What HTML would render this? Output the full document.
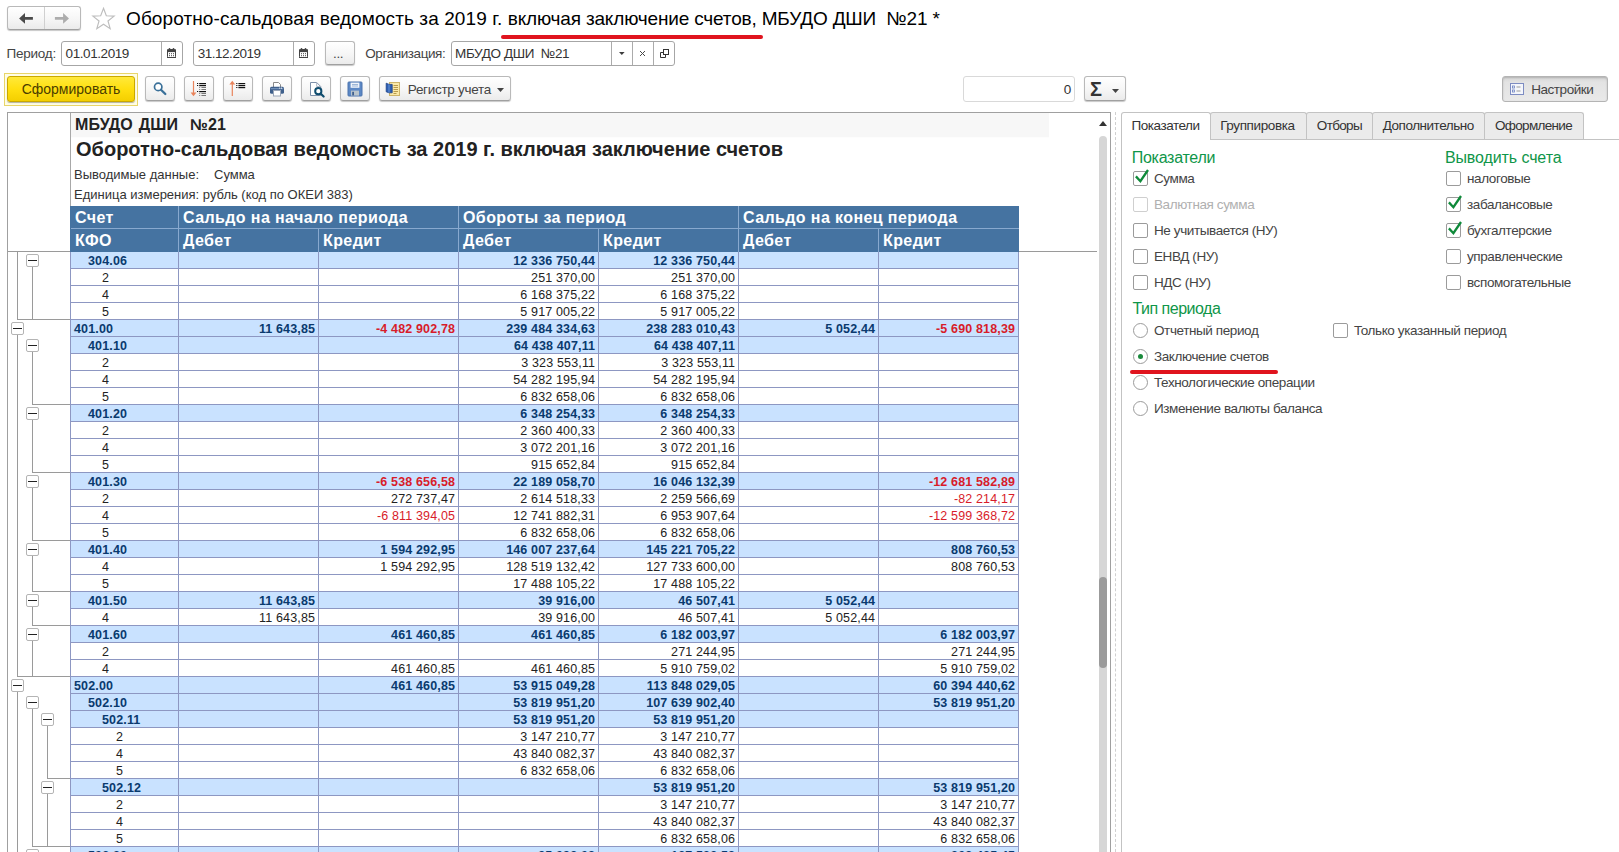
<!DOCTYPE html>
<html lang="ru">
<head>
<meta charset="utf-8">
<title>ОСВ</title>
<style>
*{box-sizing:border-box;margin:0;padding:0}
html,body{width:1619px;height:852px;overflow:hidden;background:#fff}
body{position:relative;font-family:"Liberation Sans",sans-serif;font-size:13px;color:#333;}
.abs{position:absolute}
/* generic button */
.btn{position:absolute;border:1px solid #b9b9b9;border-bottom-color:#a0a0a0;border-radius:3px;background:linear-gradient(#ffffff,#f6f6f6 55%,#ebebeb);box-shadow:0 1px 1px rgba(0,0,0,.22);}
.inp{position:absolute;border:1px solid #a6a6a6;border-radius:3px;background:#fff;height:25px}
.lbl{position:absolute;white-space:nowrap;color:#444;font-size:13.5px;letter-spacing:-.37px}
/* title */
#title{left:126px;top:8px;font-size:19px;color:#000;white-space:nowrap;line-height:22px}
/* sheet */
#sheet{position:absolute;left:7px;top:112px;width:1104px;height:760px;border:1px solid #a0a0a0;background:#fff}
.r{position:absolute;left:0;height:17px;width:1019px}
.c{position:absolute;top:0;height:16px;line-height:18px;font-size:12.5px;letter-spacing:.15px;white-space:nowrap;color:#222;overflow:hidden}
.c.v{text-align:right;padding-right:2.85px}
.c.n{color:#d81c2a}
.g .c{background:#c9e2ff;font-weight:bold;color:#0a3a6e}
.g .c.n{color:#d81c2a}
.bx{position:absolute;width:13px;height:13px;border:1px solid #b4b4b4;border-radius:2px;background:#fff;z-index:3}
.bx i{position:absolute;left:1px;top:5px;width:9px;height:1px;background:#222}
.vl{position:absolute;width:1px;background:#9a9a9a;z-index:2}
.hl{position:absolute;height:1px;background:#9a9a9a;z-index:2}
.gv{position:absolute;width:1px;background:#8d97c2;z-index:1}
.gh{position:absolute;height:1px;background:#8d97c2;z-index:1}
.hd{position:absolute;background:#4573a1;color:#fff;font-weight:bold;font-size:16px;line-height:24px;padding-left:4px;white-space:nowrap;letter-spacing:.4px}
/* right panel */
.tab{position:absolute;top:112px;height:27px;border:1px solid #c3c3c3;border-bottom:none;border-radius:3px 3px 0 0;background:#ebebeb;font-size:13.5px;line-height:26px;text-align:center;color:#333;letter-spacing:-.4px}
.tt{position:absolute;top:118px;font-size:13.5px;line-height:16px;color:#333;white-space:nowrap;z-index:3}
.tab.on{background:#fff;height:28px;z-index:2}
.sec{position:absolute;font-size:16px;color:#0f9649;white-space:nowrap;line-height:18px}
.cb{position:absolute;width:15px;height:15px;border:1px solid #9b9b9b;border-radius:2px;background:#fff}
.cb.dis{border-color:#cfcfcf}
.rd{position:absolute;width:15px;height:15px;border:1px solid #9b9b9b;border-radius:50%;background:#fff}
.rd.on::after{content:"";position:absolute;left:4px;top:4px;width:5px;height:5px;border-radius:50%;background:#1a8a3c}
.ol{position:absolute;font-size:13.5px;color:#444;white-space:nowrap;line-height:16px;letter-spacing:-.4px}
.ol.dis{color:#b0b0b0}
</style>
</head>
<body>

<!-- nav buttons -->
<div class="btn" style="left:7px;top:6px;width:74px;height:24px"></div>
<div class="abs" style="left:44px;top:7px;width:1px;height:22px;background:#d0d0d0"></div>
<svg class="abs" style="left:18px;top:12px" width="16" height="13" viewBox="0 0 16 13"><path d="M1.1 6.4L7 1.1v4h7.9v2.7H7v4z" fill="#4a4a4a"/></svg>
<svg class="abs" style="left:54px;top:12px" width="16" height="13" viewBox="0 0 16 13"><path d="M15 6.4L9.1 1.1v4H0.9v2.7h8.2v4z" fill="#adadad"/></svg>
<!-- star -->
<svg class="abs" style="left:90.6px;top:6.4px" width="25" height="25" viewBox="0 0 24 24"><path d="M12 2.2l2.7 7.2 7.5.3-5.9 4.7 2.1 7.3L12 17.5l-6.4 4.2 2.1-7.3-5.9-4.7 7.5-.3z" fill="#fff" stroke="#bdbdbd" stroke-width="1.1" stroke-linejoin="miter"/></svg>
<div id="title" class="abs"><span style="letter-spacing:.1px">Оборотно-сальдовая ведомость за 2019 г. </span><span style="letter-spacing:-.17px">включая заключение счетов, МБУДО ДШИ&nbsp; №21 *</span></div>
<div class="abs" style="left:501px;top:35px;width:262px;height:4px;border-radius:2px;background:#e0141e"></div>

<!-- period row -->
<div class="lbl" style="left:6.6px;top:46px;line-height:16px;letter-spacing:-.26px">Период:</div>
<div class="inp" style="left:61px;top:41px;width:122px"></div>
<div class="abs" style="left:161px;top:42px;width:1px;height:23px;background:#ababab"></div>
<div class="lbl" style="left:65.6px;top:46px;line-height:16px;color:#333;letter-spacing:-.43px">01.01.2019</div>
<div class="inp" style="left:193px;top:41px;width:122px"></div>
<div class="abs" style="left:293px;top:42px;width:1px;height:23px;background:#ababab"></div>
<div class="lbl" style="left:197.7px;top:46px;line-height:16px;color:#333;letter-spacing:-.47px">31.12.2019</div>
<!-- calendar icons -->
<svg class="abs" style="left:167px;top:48px" width="9" height="10" viewBox="0 0 9 10"><rect x="0.5" y="1.5" width="8" height="8" rx="0.8" fill="#fff" stroke="#444"/><rect x="0" y="1.5" width="9" height="2.6" fill="#444"/><rect x="1.8" y="0" width="1.4" height="2.4" rx="0.6" fill="#444"/><rect x="5.8" y="0" width="1.4" height="2.4" rx="0.6" fill="#444"/><rect x="0" y="9" width="9" height="1" fill="#444"/><g fill="#444"><rect x="2" y="5.2" width="1" height="1"/><rect x="4" y="5.2" width="1" height="1"/><rect x="6" y="5.2" width="1" height="1"/><rect x="2" y="7.2" width="1" height="1"/><rect x="4" y="7.2" width="1" height="1"/><rect x="6" y="7.2" width="1" height="1"/></g></svg>
<svg class="abs" style="left:299px;top:48px" width="9" height="10" viewBox="0 0 9 10"><rect x="0.5" y="1.5" width="8" height="8" rx="0.8" fill="#fff" stroke="#444"/><rect x="0" y="1.5" width="9" height="2.6" fill="#444"/><rect x="1.8" y="0" width="1.4" height="2.4" rx="0.6" fill="#444"/><rect x="5.8" y="0" width="1.4" height="2.4" rx="0.6" fill="#444"/><rect x="0" y="9" width="9" height="1" fill="#444"/><g fill="#444"><rect x="2" y="5.2" width="1" height="1"/><rect x="4" y="5.2" width="1" height="1"/><rect x="6" y="5.2" width="1" height="1"/><rect x="2" y="7.2" width="1" height="1"/><rect x="4" y="7.2" width="1" height="1"/><rect x="6" y="7.2" width="1" height="1"/></g></svg>
<div class="btn" style="left:325px;top:41px;width:30px;height:24px"></div>
<div class="lbl" style="left:333px;top:46px;line-height:16px;color:#444">...</div>
<div class="lbl" style="left:365.3px;top:46px;line-height:16px;letter-spacing:-.43px">Организация:</div>
<div class="inp" style="left:451px;top:41px;width:224px"></div>
<div class="abs" style="left:611px;top:42px;width:1px;height:23px;background:#ababab"></div>
<div class="abs" style="left:632px;top:42px;width:1px;height:23px;background:#ababab"></div>
<div class="abs" style="left:653px;top:42px;width:1px;height:23px;background:#ababab"></div>
<div class="lbl" style="left:455px;top:46px;line-height:16px;color:#333">МБУДО ДШИ&nbsp; №21</div>
<svg class="abs" style="left:619px;top:52px" width="6" height="3" viewBox="0 0 6 3"><path d="M0 0h5.6L2.8 3z" fill="#3c3c3c"/></svg>
<svg class="abs" style="left:639px;top:50px" width="7" height="7" viewBox="0 0 7 7"><path d="M1 1l5 5M6 1l-5 5" stroke="#4a4a4a" stroke-width="1"/></svg>
<svg class="abs" style="left:660px;top:49px" width="10" height="10" viewBox="0 0 10 10"><rect x="3.5" y="0.5" width="5" height="5" fill="#fff" stroke="#333"/><path d="M3.5 3.5h-3v5h5v-3" fill="none" stroke="#333"/></svg>

<!-- toolbar -->
<div class="abs" style="left:4px;top:73px;width:134px;height:33px;border:1px solid #e8d569;background:#fffde4"></div>
<div class="abs" style="left:7px;top:76px;width:128px;height:26px;border:1px solid #c9a800;border-radius:3px;background:linear-gradient(#ffe93a,#ffdf10 50%,#f4cf00);box-shadow:0 1px 1px rgba(0,0,0,.3)"></div>
<div class="lbl" style="left:7px;top:81px;width:128px;text-align:center;font-size:14px;letter-spacing:0;line-height:17px;color:#4a3d00">Сформировать</div>

<div class="btn" style="left:145px;top:76px;width:30px;height:25px"></div>
<div class="btn" style="left:184px;top:76px;width:30px;height:25px"></div>
<div class="btn" style="left:223px;top:76px;width:30px;height:25px"></div>
<div class="btn" style="left:262px;top:76px;width:30px;height:25px"></div>
<div class="btn" style="left:301px;top:76px;width:30px;height:25px"></div>
<div class="btn" style="left:340px;top:76px;width:30px;height:25px"></div>
<div class="btn" style="left:379px;top:76px;width:132px;height:25px"></div>
<div class="lbl" style="left:407.8px;top:82px;line-height:16px;color:#444;letter-spacing:-.3px">Регистр учета</div>
<svg class="abs" style="left:497px;top:88px" width="7" height="4" viewBox="0 0 7 4"><path d="M0 0h7L3.5 4z" fill="#444"/></svg>
<!-- search -->
<svg class="abs" style="left:150px;top:80px" width="20" height="18" viewBox="0 0 20 18"><circle cx="8.2" cy="6.9" r="3.7" fill="#fff" stroke="#3a7099" stroke-width="1.7"/><path d="M11 9.7L15.3 14" stroke="#3a7099" stroke-width="2.3" stroke-linecap="round"/></svg>
<!-- sort down / expand -->
<svg class="abs" style="left:188px;top:79px" width="22" height="20" viewBox="0 0 22 20"><path d="M5.5 2v14" stroke="#e8845c" stroke-width="1.2"/><path d="M2.6 13.6h5.8L5.5 17.2z" fill="#e8845c"/>
<g fill="#111"><rect x="9" y="4" width="1.2" height="1"/><rect x="11.2" y="4" width="6.8" height="1.2"/><rect x="9" y="6" width="1.2" height="1"/><rect x="11.2" y="6" width="6.8" height="1.2"/><rect x="9" y="12" width="1.2" height="1"/><rect x="11.2" y="12" width="6.8" height="1.2"/></g>
<g fill="#777"><rect x="11.2" y="8" width="1" height="1"/><rect x="13.4" y="8" width="4.6" height="1"/><rect x="11.2" y="10" width="1" height="1"/><rect x="13.4" y="10" width="4.6" height="1"/><rect x="11.2" y="14" width="1" height="1"/><rect x="13.4" y="14" width="4.6" height="1"/><rect x="11.2" y="16" width="1" height="1"/><rect x="13.4" y="16" width="4.6" height="1"/></g></svg>
<!-- sort up / collapse -->
<svg class="abs" style="left:227px;top:79px" width="22" height="20" viewBox="0 0 22 20"><path d="M5.3 3v14" stroke="#e8845c" stroke-width="1.2"/><path d="M2.4 5.4h5.8L5.3 1.8z" fill="#e8845c"/>
<g fill="#111"><rect x="9.2" y="4" width="1.2" height="1"/><rect x="11.4" y="4" width="6.8" height="1.2"/><rect x="9.2" y="6" width="1.2" height="1"/><rect x="11.4" y="6" width="6.8" height="1.2"/><rect x="9.2" y="8" width="1.2" height="1"/><rect x="11.4" y="8" width="6.8" height="1.2"/></g></svg>
<!-- printer -->
<svg class="abs" style="left:269px;top:81px" width="16" height="16" viewBox="0 0 16 16"><path d="M4.5 6V1.5h5l2 2V6" fill="#fff" stroke="#8a8a8a" stroke-width="1"/><rect x="1" y="5.8" width="14" height="7" rx="1.6" fill="#3f608c"/><rect x="1.8" y="7.2" width="12.4" height="1" fill="#7d9cc4"/><rect x="10.2" y="6.6" width="1" height="1" fill="#fff"/><rect x="12" y="6.6" width="1" height="1" fill="#fff"/><rect x="4.5" y="9.5" width="7" height="5.5" fill="#fff" stroke="#9aa6b8" stroke-width="1"/></svg>
<!-- preview -->
<svg class="abs" style="left:308px;top:81px" width="18" height="17" viewBox="0 0 18 17"><path d="M2.5 1.5h6.2l4 4V14.5h-10.2z" fill="#fff" stroke="#7d8fa8" stroke-width="1"/><path d="M8.7 1.5v4h4" fill="none" stroke="#aab4c4" stroke-width="1"/><circle cx="10.3" cy="10.2" r="3.1" fill="#fff" stroke="#0f4d6e" stroke-width="2"/><path d="M12.8 12.7L15.6 15.5" stroke="#0f4d6e" stroke-width="2.2" stroke-linecap="round"/></svg>
<!-- save -->
<svg class="abs" style="left:347px;top:81px" width="16" height="16" viewBox="0 0 16 16"><rect x="1" y="1" width="14" height="14" rx="0.8" fill="#5c88c5" stroke="#4a73ad" stroke-width="1"/><rect x="3.6" y="1.6" width="8.8" height="5.2" fill="#eef3fa"/><path d="M5 3.5h6M5 5h6" stroke="#9db6d8" stroke-width="1"/><rect x="4" y="9.6" width="8" height="5" fill="#b9c4cc"/><rect x="5.2" y="10.8" width="1.8" height="3.6" fill="#3f5f8f"/></svg>
<!-- register -->
<svg class="abs" style="left:385px;top:81px" width="16" height="16" viewBox="0 0 16 16"><rect x="4.5" y="1.5" width="10" height="13" fill="#fbe9a8" stroke="#cdb46a" stroke-width="1"/><path d="M8.5 4.5h4.5M8.5 6.5h4.5M8.5 8.5h4.5M8.5 10.5h4.5M8.5 12.5h3" stroke="#b89b4e" stroke-width="1"/><path d="M1.2 2.2L4 3.4h3.2v8.4H4L1.2 10.8z" fill="#2c5fb3" stroke="#1b3f85" stroke-width="0.8"/><path d="M4 3.4v8.4" stroke="#7aa2e0" stroke-width="0.8"/></svg>


<div class="inp" style="left:963px;top:76px;width:112px;height:26px;border-color:#d9d9d9"></div>
<div class="lbl" style="left:963px;top:82px;width:108px;text-align:right;line-height:16px;color:#333">0</div>
<div class="btn" style="left:1084px;top:76px;width:42px;height:25px"></div>
<div class="lbl" style="left:1090px;top:77px;font-size:20px;line-height:24px;color:#333;font-weight:bold">Σ</div>
<svg class="abs" style="left:1112px;top:89px" width="7" height="4" viewBox="0 0 7 4"><path d="M0 0h7L3.5 4z" fill="#444"/></svg>
<div class="btn" style="left:1502px;top:76px;width:106px;height:26px;background:linear-gradient(#d6d6d6,#e3e3e3 22%,#e9e9e9);border-color:#b4b4b4;box-shadow:inset 0 1px 2px rgba(0,0,0,.18)"></div>
<div class="lbl" style="left:1531.2px;top:82px;line-height:16px;color:#444;letter-spacing:-.44px">Настройки</div>
<svg class="abs" style="left:1510px;top:83px" width="14" height="12" viewBox="0 0 14 12"><rect x="0.5" y="0.5" width="13" height="11" fill="#f4f6fb" stroke="#7d8cc2"/><rect x="2.5" y="3" width="2" height="2" fill="#fff" stroke="#6a7fc0" stroke-width="0.8"/><rect x="2.5" y="7" width="2" height="2" fill="#fff" stroke="#6a7fc0" stroke-width="0.8"/><path d="M6.5 4h4M6.5 8h4" stroke="#9a9a9a" stroke-width="1"/></svg>

<!-- spreadsheet -->
<div id="sheet"></div>
<div class="abs" style="left:71px;top:113px;width:978px;height:24px;background:#f7f7f7"></div>
<div class="abs" style="left:71px;top:137px;width:978px;height:1px;background:#fdfdfd"></div>
<div class="vl" style="left:70px;top:113px;height:93px;background:#a8a8a8"></div>
<div class="abs" style="left:75px;top:115px;font-size:16px;font-weight:bold;color:#222;line-height:20px;white-space:pre;word-spacing:1.4px;letter-spacing:.1px">МБУДО ДШИ  №21</div>
<div class="abs" id="shtitle" style="left:76px;top:137px;font-size:20px;font-weight:bold;color:#222;line-height:24px;white-space:nowrap">Оборотно-сальдовая ведомость за 2019 г. включая заключение счетов</div>
<div class="abs" style="left:74px;top:167px;font-size:13px;color:#333;line-height:16px;white-space:nowrap">Выводимые данные:</div>
<div class="abs" style="left:214px;top:167px;font-size:13px;color:#333;line-height:16px;white-space:nowrap">Сумма</div>
<div class="abs" style="left:74px;top:187px;font-size:13px;color:#333;line-height:16px;white-space:nowrap">Единица измерения: рубль (код по ОКЕИ 383)</div>

<!-- header -->
<div class="hd" style="left:70px;top:206px;width:949px;height:46px"></div>
<div class="hd" style="left:71px;top:206px;width:107px;height:23px;padding-left:4px">Счет</div>
<div class="hd" style="left:179px;top:206px;width:279px;height:23px">Сальдо на начало периода</div>
<div class="hd" style="left:459px;top:206px;width:279px;height:23px">Обороты за период</div>
<div class="hd" style="left:739px;top:206px;width:279px;height:23px">Сальдо на конец периода</div>
<div class="hd" style="left:71px;top:229px;width:107px;height:22px;padding-left:4px">КФО</div>
<div class="hd" style="left:179px;top:229px;width:139px;height:22px">Дебет</div>
<div class="hd" style="left:319px;top:229px;width:139px;height:22px">Кредит</div>
<div class="hd" style="left:459px;top:229px;width:139px;height:22px">Дебет</div>
<div class="hd" style="left:599px;top:229px;width:139px;height:22px">Кредит</div>
<div class="hd" style="left:739px;top:229px;width:139px;height:22px">Дебет</div>
<div class="hd" style="left:879px;top:229px;width:139px;height:22px">Кредит</div>
<!-- header dividers -->
<div class="gh" style="left:71px;top:228px;width:948px;background:#88a9cf;z-index:4"></div>
<div class="gv" style="left:178px;top:206px;height:46px;background:#88a9cf;z-index:4"></div>
<div class="gv" style="left:458px;top:206px;height:46px;background:#88a9cf;z-index:4"></div>
<div class="gv" style="left:738px;top:206px;height:46px;background:#88a9cf;z-index:4"></div>
<div class="gv" style="left:318px;top:229px;height:23px;background:#88a9cf;z-index:4"></div>
<div class="gv" style="left:598px;top:229px;height:23px;background:#88a9cf;z-index:4"></div>
<div class="gv" style="left:878px;top:229px;height:23px;background:#88a9cf;z-index:4"></div>

<!-- freeze line -->
<div class="hl" style="left:8px;top:251px;width:62px;background:#9a9a9a"></div>
<div class="hl" style="left:1019px;top:251px;width:78px;background:#9a9a9a"></div>

<!-- rows -->
<div class="r g" style="top:252px"><div class="c a" style="left:71px;width:107px;padding-left:17px">304.06</div><div class="c v" style="left:179px;width:139px"></div><div class="c v" style="left:319px;width:139px"></div><div class="c v" style="left:459px;width:139px">12 336 750,44</div><div class="c v" style="left:599px;width:139px">12 336 750,44</div><div class="c v" style="left:739px;width:139px"></div><div class="c v" style="left:879px;width:139px"></div></div>
<div class="r" style="top:269px"><div class="c a" style="left:71px;width:107px;padding-left:31px">2</div><div class="c v" style="left:179px;width:139px"></div><div class="c v" style="left:319px;width:139px"></div><div class="c v" style="left:459px;width:139px">251 370,00</div><div class="c v" style="left:599px;width:139px">251 370,00</div><div class="c v" style="left:739px;width:139px"></div><div class="c v" style="left:879px;width:139px"></div></div>
<div class="r" style="top:286px"><div class="c a" style="left:71px;width:107px;padding-left:31px">4</div><div class="c v" style="left:179px;width:139px"></div><div class="c v" style="left:319px;width:139px"></div><div class="c v" style="left:459px;width:139px">6 168 375,22</div><div class="c v" style="left:599px;width:139px">6 168 375,22</div><div class="c v" style="left:739px;width:139px"></div><div class="c v" style="left:879px;width:139px"></div></div>
<div class="r" style="top:303px"><div class="c a" style="left:71px;width:107px;padding-left:31px">5</div><div class="c v" style="left:179px;width:139px"></div><div class="c v" style="left:319px;width:139px"></div><div class="c v" style="left:459px;width:139px">5 917 005,22</div><div class="c v" style="left:599px;width:139px">5 917 005,22</div><div class="c v" style="left:739px;width:139px"></div><div class="c v" style="left:879px;width:139px"></div></div>
<div class="r g" style="top:320px"><div class="c a" style="left:71px;width:107px;padding-left:3px">401.00</div><div class="c v" style="left:179px;width:139px">11 643,85</div><div class="c v n" style="left:319px;width:139px">-4 482 902,78</div><div class="c v" style="left:459px;width:139px">239 484 334,63</div><div class="c v" style="left:599px;width:139px">238 283 010,43</div><div class="c v" style="left:739px;width:139px">5 052,44</div><div class="c v n" style="left:879px;width:139px">-5 690 818,39</div></div>
<div class="r g" style="top:337px"><div class="c a" style="left:71px;width:107px;padding-left:17px">401.10</div><div class="c v" style="left:179px;width:139px"></div><div class="c v" style="left:319px;width:139px"></div><div class="c v" style="left:459px;width:139px">64 438 407,11</div><div class="c v" style="left:599px;width:139px">64 438 407,11</div><div class="c v" style="left:739px;width:139px"></div><div class="c v" style="left:879px;width:139px"></div></div>
<div class="r" style="top:354px"><div class="c a" style="left:71px;width:107px;padding-left:31px">2</div><div class="c v" style="left:179px;width:139px"></div><div class="c v" style="left:319px;width:139px"></div><div class="c v" style="left:459px;width:139px">3 323 553,11</div><div class="c v" style="left:599px;width:139px">3 323 553,11</div><div class="c v" style="left:739px;width:139px"></div><div class="c v" style="left:879px;width:139px"></div></div>
<div class="r" style="top:371px"><div class="c a" style="left:71px;width:107px;padding-left:31px">4</div><div class="c v" style="left:179px;width:139px"></div><div class="c v" style="left:319px;width:139px"></div><div class="c v" style="left:459px;width:139px">54 282 195,94</div><div class="c v" style="left:599px;width:139px">54 282 195,94</div><div class="c v" style="left:739px;width:139px"></div><div class="c v" style="left:879px;width:139px"></div></div>
<div class="r" style="top:388px"><div class="c a" style="left:71px;width:107px;padding-left:31px">5</div><div class="c v" style="left:179px;width:139px"></div><div class="c v" style="left:319px;width:139px"></div><div class="c v" style="left:459px;width:139px">6 832 658,06</div><div class="c v" style="left:599px;width:139px">6 832 658,06</div><div class="c v" style="left:739px;width:139px"></div><div class="c v" style="left:879px;width:139px"></div></div>
<div class="r g" style="top:405px"><div class="c a" style="left:71px;width:107px;padding-left:17px">401.20</div><div class="c v" style="left:179px;width:139px"></div><div class="c v" style="left:319px;width:139px"></div><div class="c v" style="left:459px;width:139px">6 348 254,33</div><div class="c v" style="left:599px;width:139px">6 348 254,33</div><div class="c v" style="left:739px;width:139px"></div><div class="c v" style="left:879px;width:139px"></div></div>
<div class="r" style="top:422px"><div class="c a" style="left:71px;width:107px;padding-left:31px">2</div><div class="c v" style="left:179px;width:139px"></div><div class="c v" style="left:319px;width:139px"></div><div class="c v" style="left:459px;width:139px">2 360 400,33</div><div class="c v" style="left:599px;width:139px">2 360 400,33</div><div class="c v" style="left:739px;width:139px"></div><div class="c v" style="left:879px;width:139px"></div></div>
<div class="r" style="top:439px"><div class="c a" style="left:71px;width:107px;padding-left:31px">4</div><div class="c v" style="left:179px;width:139px"></div><div class="c v" style="left:319px;width:139px"></div><div class="c v" style="left:459px;width:139px">3 072 201,16</div><div class="c v" style="left:599px;width:139px">3 072 201,16</div><div class="c v" style="left:739px;width:139px"></div><div class="c v" style="left:879px;width:139px"></div></div>
<div class="r" style="top:456px"><div class="c a" style="left:71px;width:107px;padding-left:31px">5</div><div class="c v" style="left:179px;width:139px"></div><div class="c v" style="left:319px;width:139px"></div><div class="c v" style="left:459px;width:139px">915 652,84</div><div class="c v" style="left:599px;width:139px">915 652,84</div><div class="c v" style="left:739px;width:139px"></div><div class="c v" style="left:879px;width:139px"></div></div>
<div class="r g" style="top:473px"><div class="c a" style="left:71px;width:107px;padding-left:17px">401.30</div><div class="c v" style="left:179px;width:139px"></div><div class="c v n" style="left:319px;width:139px">-6 538 656,58</div><div class="c v" style="left:459px;width:139px">22 189 058,70</div><div class="c v" style="left:599px;width:139px">16 046 132,39</div><div class="c v" style="left:739px;width:139px"></div><div class="c v n" style="left:879px;width:139px">-12 681 582,89</div></div>
<div class="r" style="top:490px"><div class="c a" style="left:71px;width:107px;padding-left:31px">2</div><div class="c v" style="left:179px;width:139px"></div><div class="c v" style="left:319px;width:139px">272 737,47</div><div class="c v" style="left:459px;width:139px">2 614 518,33</div><div class="c v" style="left:599px;width:139px">2 259 566,69</div><div class="c v" style="left:739px;width:139px"></div><div class="c v n" style="left:879px;width:139px">-82 214,17</div></div>
<div class="r" style="top:507px"><div class="c a" style="left:71px;width:107px;padding-left:31px">4</div><div class="c v" style="left:179px;width:139px"></div><div class="c v n" style="left:319px;width:139px">-6 811 394,05</div><div class="c v" style="left:459px;width:139px">12 741 882,31</div><div class="c v" style="left:599px;width:139px">6 953 907,64</div><div class="c v" style="left:739px;width:139px"></div><div class="c v n" style="left:879px;width:139px">-12 599 368,72</div></div>
<div class="r" style="top:524px"><div class="c a" style="left:71px;width:107px;padding-left:31px">5</div><div class="c v" style="left:179px;width:139px"></div><div class="c v" style="left:319px;width:139px"></div><div class="c v" style="left:459px;width:139px">6 832 658,06</div><div class="c v" style="left:599px;width:139px">6 832 658,06</div><div class="c v" style="left:739px;width:139px"></div><div class="c v" style="left:879px;width:139px"></div></div>
<div class="r g" style="top:541px"><div class="c a" style="left:71px;width:107px;padding-left:17px">401.40</div><div class="c v" style="left:179px;width:139px"></div><div class="c v" style="left:319px;width:139px">1 594 292,95</div><div class="c v" style="left:459px;width:139px">146 007 237,64</div><div class="c v" style="left:599px;width:139px">145 221 705,22</div><div class="c v" style="left:739px;width:139px"></div><div class="c v" style="left:879px;width:139px">808 760,53</div></div>
<div class="r" style="top:558px"><div class="c a" style="left:71px;width:107px;padding-left:31px">4</div><div class="c v" style="left:179px;width:139px"></div><div class="c v" style="left:319px;width:139px">1 594 292,95</div><div class="c v" style="left:459px;width:139px">128 519 132,42</div><div class="c v" style="left:599px;width:139px">127 733 600,00</div><div class="c v" style="left:739px;width:139px"></div><div class="c v" style="left:879px;width:139px">808 760,53</div></div>
<div class="r" style="top:575px"><div class="c a" style="left:71px;width:107px;padding-left:31px">5</div><div class="c v" style="left:179px;width:139px"></div><div class="c v" style="left:319px;width:139px"></div><div class="c v" style="left:459px;width:139px">17 488 105,22</div><div class="c v" style="left:599px;width:139px">17 488 105,22</div><div class="c v" style="left:739px;width:139px"></div><div class="c v" style="left:879px;width:139px"></div></div>
<div class="r g" style="top:592px"><div class="c a" style="left:71px;width:107px;padding-left:17px">401.50</div><div class="c v" style="left:179px;width:139px">11 643,85</div><div class="c v" style="left:319px;width:139px"></div><div class="c v" style="left:459px;width:139px">39 916,00</div><div class="c v" style="left:599px;width:139px">46 507,41</div><div class="c v" style="left:739px;width:139px">5 052,44</div><div class="c v" style="left:879px;width:139px"></div></div>
<div class="r" style="top:609px"><div class="c a" style="left:71px;width:107px;padding-left:31px">4</div><div class="c v" style="left:179px;width:139px">11 643,85</div><div class="c v" style="left:319px;width:139px"></div><div class="c v" style="left:459px;width:139px">39 916,00</div><div class="c v" style="left:599px;width:139px">46 507,41</div><div class="c v" style="left:739px;width:139px">5 052,44</div><div class="c v" style="left:879px;width:139px"></div></div>
<div class="r g" style="top:626px"><div class="c a" style="left:71px;width:107px;padding-left:17px">401.60</div><div class="c v" style="left:179px;width:139px"></div><div class="c v" style="left:319px;width:139px">461 460,85</div><div class="c v" style="left:459px;width:139px">461 460,85</div><div class="c v" style="left:599px;width:139px">6 182 003,97</div><div class="c v" style="left:739px;width:139px"></div><div class="c v" style="left:879px;width:139px">6 182 003,97</div></div>
<div class="r" style="top:643px"><div class="c a" style="left:71px;width:107px;padding-left:31px">2</div><div class="c v" style="left:179px;width:139px"></div><div class="c v" style="left:319px;width:139px"></div><div class="c v" style="left:459px;width:139px"></div><div class="c v" style="left:599px;width:139px">271 244,95</div><div class="c v" style="left:739px;width:139px"></div><div class="c v" style="left:879px;width:139px">271 244,95</div></div>
<div class="r" style="top:660px"><div class="c a" style="left:71px;width:107px;padding-left:31px">4</div><div class="c v" style="left:179px;width:139px"></div><div class="c v" style="left:319px;width:139px">461 460,85</div><div class="c v" style="left:459px;width:139px">461 460,85</div><div class="c v" style="left:599px;width:139px">5 910 759,02</div><div class="c v" style="left:739px;width:139px"></div><div class="c v" style="left:879px;width:139px">5 910 759,02</div></div>
<div class="r g" style="top:677px"><div class="c a" style="left:71px;width:107px;padding-left:3px">502.00</div><div class="c v" style="left:179px;width:139px"></div><div class="c v" style="left:319px;width:139px">461 460,85</div><div class="c v" style="left:459px;width:139px">53 915 049,28</div><div class="c v" style="left:599px;width:139px">113 848 029,05</div><div class="c v" style="left:739px;width:139px"></div><div class="c v" style="left:879px;width:139px">60 394 440,62</div></div>
<div class="r g" style="top:694px"><div class="c a" style="left:71px;width:107px;padding-left:17px">502.10</div><div class="c v" style="left:179px;width:139px"></div><div class="c v" style="left:319px;width:139px"></div><div class="c v" style="left:459px;width:139px">53 819 951,20</div><div class="c v" style="left:599px;width:139px">107 639 902,40</div><div class="c v" style="left:739px;width:139px"></div><div class="c v" style="left:879px;width:139px">53 819 951,20</div></div>
<div class="r g" style="top:711px"><div class="c a" style="left:71px;width:107px;padding-left:31px">502.11</div><div class="c v" style="left:179px;width:139px"></div><div class="c v" style="left:319px;width:139px"></div><div class="c v" style="left:459px;width:139px">53 819 951,20</div><div class="c v" style="left:599px;width:139px">53 819 951,20</div><div class="c v" style="left:739px;width:139px"></div><div class="c v" style="left:879px;width:139px"></div></div>
<div class="r" style="top:728px"><div class="c a" style="left:71px;width:107px;padding-left:45px">2</div><div class="c v" style="left:179px;width:139px"></div><div class="c v" style="left:319px;width:139px"></div><div class="c v" style="left:459px;width:139px">3 147 210,77</div><div class="c v" style="left:599px;width:139px">3 147 210,77</div><div class="c v" style="left:739px;width:139px"></div><div class="c v" style="left:879px;width:139px"></div></div>
<div class="r" style="top:745px"><div class="c a" style="left:71px;width:107px;padding-left:45px">4</div><div class="c v" style="left:179px;width:139px"></div><div class="c v" style="left:319px;width:139px"></div><div class="c v" style="left:459px;width:139px">43 840 082,37</div><div class="c v" style="left:599px;width:139px">43 840 082,37</div><div class="c v" style="left:739px;width:139px"></div><div class="c v" style="left:879px;width:139px"></div></div>
<div class="r" style="top:762px"><div class="c a" style="left:71px;width:107px;padding-left:45px">5</div><div class="c v" style="left:179px;width:139px"></div><div class="c v" style="left:319px;width:139px"></div><div class="c v" style="left:459px;width:139px">6 832 658,06</div><div class="c v" style="left:599px;width:139px">6 832 658,06</div><div class="c v" style="left:739px;width:139px"></div><div class="c v" style="left:879px;width:139px"></div></div>
<div class="r g" style="top:779px"><div class="c a" style="left:71px;width:107px;padding-left:31px">502.12</div><div class="c v" style="left:179px;width:139px"></div><div class="c v" style="left:319px;width:139px"></div><div class="c v" style="left:459px;width:139px"></div><div class="c v" style="left:599px;width:139px">53 819 951,20</div><div class="c v" style="left:739px;width:139px"></div><div class="c v" style="left:879px;width:139px">53 819 951,20</div></div>
<div class="r" style="top:796px"><div class="c a" style="left:71px;width:107px;padding-left:45px">2</div><div class="c v" style="left:179px;width:139px"></div><div class="c v" style="left:319px;width:139px"></div><div class="c v" style="left:459px;width:139px"></div><div class="c v" style="left:599px;width:139px">3 147 210,77</div><div class="c v" style="left:739px;width:139px"></div><div class="c v" style="left:879px;width:139px">3 147 210,77</div></div>
<div class="r" style="top:813px"><div class="c a" style="left:71px;width:107px;padding-left:45px">4</div><div class="c v" style="left:179px;width:139px"></div><div class="c v" style="left:319px;width:139px"></div><div class="c v" style="left:459px;width:139px"></div><div class="c v" style="left:599px;width:139px">43 840 082,37</div><div class="c v" style="left:739px;width:139px"></div><div class="c v" style="left:879px;width:139px">43 840 082,37</div></div>
<div class="r" style="top:830px"><div class="c a" style="left:71px;width:107px;padding-left:45px">5</div><div class="c v" style="left:179px;width:139px"></div><div class="c v" style="left:319px;width:139px"></div><div class="c v" style="left:459px;width:139px"></div><div class="c v" style="left:599px;width:139px">6 832 658,06</div><div class="c v" style="left:739px;width:139px"></div><div class="c v" style="left:879px;width:139px">6 832 658,06</div></div>
<div class="r g" style="top:847px"><div class="c a" style="left:71px;width:107px;padding-left:17px">502.20</div><div class="c v" style="left:179px;width:139px"></div><div class="c v" style="left:319px;width:139px"></div><div class="c v" style="left:459px;width:139px">95 098,08</div><div class="c v" style="left:599px;width:139px">127 533,58</div><div class="c v" style="left:739px;width:139px"></div><div class="c v" style="left:879px;width:139px">208 425,45</div></div>
<!-- grid -->
<div class="gv" style="left:70px;top:252px;height:609px"></div>
<div class="gv" style="left:178px;top:252px;height:609px"></div>
<div class="gv" style="left:318px;top:252px;height:609px"></div>
<div class="gv" style="left:458px;top:252px;height:609px"></div>
<div class="gv" style="left:598px;top:252px;height:609px"></div>
<div class="gv" style="left:738px;top:252px;height:609px"></div>
<div class="gv" style="left:878px;top:252px;height:609px"></div>
<div class="gv" style="left:1018px;top:252px;height:609px"></div>
<div class="gh" style="left:70px;top:268px;width:949px"></div>
<div class="gh" style="left:70px;top:285px;width:949px"></div>
<div class="gh" style="left:70px;top:302px;width:949px"></div>
<div class="gh" style="left:70px;top:319px;width:949px"></div>
<div class="gh" style="left:70px;top:336px;width:949px"></div>
<div class="gh" style="left:70px;top:353px;width:949px"></div>
<div class="gh" style="left:70px;top:370px;width:949px"></div>
<div class="gh" style="left:70px;top:387px;width:949px"></div>
<div class="gh" style="left:70px;top:404px;width:949px"></div>
<div class="gh" style="left:70px;top:421px;width:949px"></div>
<div class="gh" style="left:70px;top:438px;width:949px"></div>
<div class="gh" style="left:70px;top:455px;width:949px"></div>
<div class="gh" style="left:70px;top:472px;width:949px"></div>
<div class="gh" style="left:70px;top:489px;width:949px"></div>
<div class="gh" style="left:70px;top:506px;width:949px"></div>
<div class="gh" style="left:70px;top:523px;width:949px"></div>
<div class="gh" style="left:70px;top:540px;width:949px"></div>
<div class="gh" style="left:70px;top:557px;width:949px"></div>
<div class="gh" style="left:70px;top:574px;width:949px"></div>
<div class="gh" style="left:70px;top:591px;width:949px"></div>
<div class="gh" style="left:70px;top:608px;width:949px"></div>
<div class="gh" style="left:70px;top:625px;width:949px"></div>
<div class="gh" style="left:70px;top:642px;width:949px"></div>
<div class="gh" style="left:70px;top:659px;width:949px"></div>
<div class="gh" style="left:70px;top:676px;width:949px"></div>
<div class="gh" style="left:70px;top:693px;width:949px"></div>
<div class="gh" style="left:70px;top:710px;width:949px"></div>
<div class="gh" style="left:70px;top:727px;width:949px"></div>
<div class="gh" style="left:70px;top:744px;width:949px"></div>
<div class="gh" style="left:70px;top:761px;width:949px"></div>
<div class="gh" style="left:70px;top:778px;width:949px"></div>
<div class="gh" style="left:70px;top:795px;width:949px"></div>
<div class="gh" style="left:70px;top:812px;width:949px"></div>
<div class="gh" style="left:70px;top:829px;width:949px"></div>
<div class="gh" style="left:70px;top:846px;width:949px"></div>
<div class="gh" style="left:70px;top:863px;width:949px"></div>
<!-- tree -->
<div class="bx" style="left:26px;top:254px"><i></i></div>
<div class="vl" style="left:32px;top:267px;height:52px"></div>
<div class="hl" style="left:32px;top:319px;width:38px"></div>
<div class="bx" style="left:11px;top:322px"><i></i></div>
<div class="vl" style="left:17px;top:335px;height:341px"></div>
<div class="hl" style="left:17px;top:676px;width:53px"></div>
<div class="bx" style="left:26px;top:339px"><i></i></div>
<div class="vl" style="left:32px;top:352px;height:52px"></div>
<div class="hl" style="left:32px;top:404px;width:38px"></div>
<div class="bx" style="left:26px;top:407px"><i></i></div>
<div class="vl" style="left:32px;top:420px;height:52px"></div>
<div class="hl" style="left:32px;top:472px;width:38px"></div>
<div class="bx" style="left:26px;top:475px"><i></i></div>
<div class="vl" style="left:32px;top:488px;height:52px"></div>
<div class="hl" style="left:32px;top:540px;width:38px"></div>
<div class="bx" style="left:26px;top:543px"><i></i></div>
<div class="vl" style="left:32px;top:556px;height:35px"></div>
<div class="hl" style="left:32px;top:591px;width:38px"></div>
<div class="bx" style="left:26px;top:594px"><i></i></div>
<div class="vl" style="left:32px;top:607px;height:18px"></div>
<div class="hl" style="left:32px;top:625px;width:38px"></div>
<div class="bx" style="left:26px;top:628px"><i></i></div>
<div class="vl" style="left:32px;top:641px;height:35px"></div>
<div class="hl" style="left:32px;top:676px;width:38px"></div>
<div class="bx" style="left:11px;top:679px"><i></i></div>
<div class="vl" style="left:17px;top:692px;height:168px"></div>
<div class="bx" style="left:26px;top:696px"><i></i></div>
<div class="vl" style="left:32px;top:709px;height:137px"></div>
<div class="hl" style="left:32px;top:846px;width:38px"></div>
<div class="bx" style="left:41px;top:713px"><i></i></div>
<div class="vl" style="left:47px;top:726px;height:52px"></div>
<div class="hl" style="left:47px;top:778px;width:23px"></div>
<div class="bx" style="left:41px;top:781px"><i></i></div>
<div class="vl" style="left:47px;top:794px;height:52px"></div>
<div class="hl" style="left:47px;top:846px;width:23px"></div>
<div class="bx" style="left:26px;top:849px"><i></i></div>
<div class="vl" style="left:32px;top:862px;height:-2px"></div>
<div class="vl" style="left:17px;top:252px;height:67px"></div>
<div class="hl" style="left:17px;top:319px;width:53px"></div>

<!-- scrollbar -->
<svg class="abs" style="left:1099px;top:121px" width="8" height="5" viewBox="0 0 8 5"><path d="M0 5h8L4 0z" fill="#333"/></svg>
<div class="abs" style="left:1099px;top:136px;width:8px;height:730px;border-radius:4px;background:#d6d6d6"></div>
<div class="abs" style="left:1099px;top:577px;width:8px;height:91px;border-radius:4px;background:#9b9b9b"></div>

<!-- splitter -->
<div class="abs" style="left:1115px;top:112px;width:0;height:745px;border-left:1px dashed #d0d0d0"></div>

<!-- right panel -->
<div class="abs" style="left:1121px;top:139px;width:510px;height:730px;border:1px solid #c3c3c3;background:#fff"></div>
<div class="tab on" style="left:1121px;width:90px"></div>
<div class="tab" style="left:1210px;width:97px"></div>
<div class="tab" style="left:1306px;width:67px"></div>
<div class="tab" style="left:1372px;width:113px"></div>
<div class="tab" style="left:1484px;width:100px"></div>
<div class="tt" style="left:1131.5px;letter-spacing:-.46px">Показатели</div>
<div class="tt" style="left:1220.2px;letter-spacing:-.39px">Группировка</div>
<div class="tt" style="left:1316.8px;letter-spacing:-.65px">Отборы</div>
<div class="tt" style="left:1382.7px;letter-spacing:-.47px">Дополнительно</div>
<div class="tt" style="left:1495px;letter-spacing:-.68px">Оформление</div>

<div class="sec" style="left:1131.7px;top:149px;letter-spacing:-.27px">Показатели</div>
<div class="sec" style="left:1444.9px;top:149px;letter-spacing:-.1px">Выводить счета</div>
<div class="sec" style="left:1132.5px;top:300px;letter-spacing:-.5px">Тип периода</div>

<div class="cb" style="left:1133px;top:171px"><svg width="16" height="16" viewBox="0 0 16 16" style="position:absolute;left:-1px;top:-1px;overflow:visible"><path d="M2.9 5.4L7.4 10.2L15 -1" fill="none" stroke="#0f8a3a" stroke-width="2.3"/></svg></div>
<div class="ol" style="left:1154px;top:171px">Сумма</div>
<div class="cb dis" style="left:1133px;top:197px"></div>
<div class="ol dis" style="left:1154px;top:197px">Валютная сумма</div>
<div class="cb" style="left:1133px;top:223px"></div>
<div class="ol" style="left:1154px;top:223px">Не учитывается (НУ)</div>
<div class="cb" style="left:1133px;top:249px"></div>
<div class="ol" style="left:1154px;top:249px">ЕНВД (НУ)</div>
<div class="cb" style="left:1133px;top:275px"></div>
<div class="ol" style="left:1154px;top:275px">НДС (НУ)</div>
<div class="cb" style="left:1446px;top:171px"></div>
<div class="ol" style="left:1467px;top:171px">налоговые</div>
<div class="cb" style="left:1446px;top:197px"><svg width="16" height="16" viewBox="0 0 16 16" style="position:absolute;left:-1px;top:-1px;overflow:visible"><path d="M2.9 5.4L7.4 10.2L15 -1" fill="none" stroke="#0f8a3a" stroke-width="2.3"/></svg></div>
<div class="ol" style="left:1467px;top:197px">забалансовые</div>
<div class="cb" style="left:1446px;top:223px"><svg width="16" height="16" viewBox="0 0 16 16" style="position:absolute;left:-1px;top:-1px;overflow:visible"><path d="M2.9 5.4L7.4 10.2L15 -1" fill="none" stroke="#0f8a3a" stroke-width="2.3"/></svg></div>
<div class="ol" style="left:1467px;top:223px">бухгалтерские</div>
<div class="cb" style="left:1446px;top:249px"></div>
<div class="ol" style="left:1467px;top:249px">управленческие</div>
<div class="cb" style="left:1446px;top:275px"></div>
<div class="ol" style="left:1467px;top:275px">вспомогательные</div>
<div class="rd" style="left:1133px;top:323px"></div>
<div class="ol" style="left:1154px;top:323px">Отчетный период</div>
<div class="rd on" style="left:1133px;top:349px"></div>
<div class="ol" style="left:1154px;top:349px">Заключение счетов</div>
<div class="rd" style="left:1133px;top:375px"></div>
<div class="ol" style="left:1154px;top:375px">Технологические операции</div>
<div class="rd" style="left:1133px;top:401px"></div>
<div class="ol" style="left:1154px;top:401px">Изменение валюты баланса</div>
<div class="cb" style="left:1333px;top:323px"></div>
<div class="ol" style="left:1354px;top:323px">Только указанный период</div>

<div class="abs" style="left:1130px;top:370px;width:148px;height:4px;border-radius:2px;background:#e0141e"></div>
</body>
</html>
